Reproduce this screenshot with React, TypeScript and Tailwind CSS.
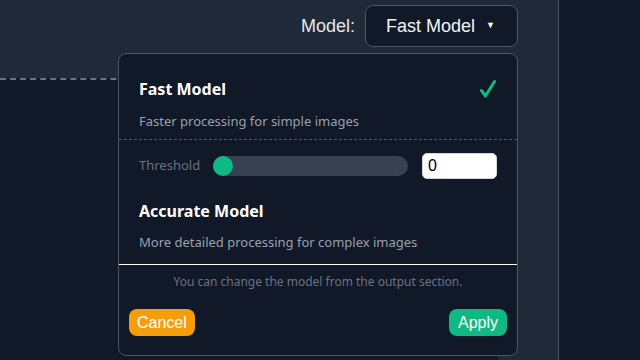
import { useState } from "react";

const options = [
  { id: "fast", name: "Fast Model", desc: "Faster processing for simple images" },
  { id: "accurate", name: "Accurate Model", desc: "More detailed processing for complex images" },
];

const App = () => {
  const [selected, setSelected] = useState("fast");
  const [threshold, setThreshold] = useState("0");

  return (
    <div className="flex w-[640px] h-[360px] overflow-hidden bg-[#111827] font-['Liberation_Sans',Arial,sans-serif]">
      <main className="relative w-[559px] h-full bg-[#1f2937] border-r border-[#4b5563] flex flex-col">
        <header className="flex justify-end items-start pt-[5px] pr-[40px] h-[78px]">
          <div className="flex items-center gap-[10px] h-[42px]">
            <span className="text-[18px] text-gray-200">Model:</span>
            <button className="flex items-center justify-between w-[153px] h-[42px] pl-[20px] pr-[22px] rounded-lg border border-[#4b5563] bg-[#111827] text-[18px] text-gray-100">
              <span>Fast Model</span>
              <span className="text-[9px] text-white">▼</span>
            </button>
          </div>
        </header>
        <div className="flex-1 mr-[60px] bg-[#111827] border-t-2 border-dashed border-[#6b7280]" />

        <div className="absolute left-[118px] top-[53px] w-[400px] h-[303px] rounded-lg border border-[#4b5563] bg-[#111827] flex flex-col font-['Noto_Sans',sans-serif]">
          <div
            className="px-5 pt-[23px] pb-[8px] border-b border-dashed border-[#4b5563] cursor-pointer"
            onClick={() => setSelected("fast")}
          >
            <div className="flex items-center justify-between h-[24px]">
              <span className="text-[16px] font-bold text-white">{options[0].name}</span>
              {selected === "fast" && (
                <svg width="16" height="18" viewBox="0 0 16 18" className="mr-[1px]">
                  <path d="M1.5 10.5 L5.5 16 L14.5 1.5" fill="none" stroke="#10b981" strokeWidth="3" strokeLinecap="round" strokeLinejoin="round" />
                </svg>
              )}
            </div>
            <p className="mt-[10px] text-[13px] leading-[20px] text-gray-400">{options[0].desc}</p>
          </div>

          <div className="flex items-center gap-[13px] px-5 pt-[13px]">
            <span className="text-[13px] text-gray-500">Threshold</span>
            <div className="flex-1 h-[20px] rounded-full bg-[#374151] flex items-center">
              <div className="w-[20px] h-[20px] rounded-full bg-[#10b981]" />
            </div>
            <input
              value={threshold}
              onChange={(e) => setThreshold(e.target.value)}
              className="ml-[1px] w-[75px] h-[26px] rounded-[5px] bg-white border border-gray-300 px-[5px] text-[16px] text-black font-['Liberation_Sans',Arial,sans-serif] outline-none"
            />
          </div>

          <div className="px-5 pt-[20px] pb-[12px] border-b border-white cursor-pointer" onClick={() => setSelected("accurate")}>
            <div className="flex items-center h-[24px]">
              <span className="text-[16px] font-bold text-white">{options[1].name}</span>
            </div>
            <p className="mt-[9px] text-[13px] leading-[20px] text-gray-400">{options[1].desc}</p>
          </div>

          <p className="pt-[9px] text-center text-[12px] leading-[16px] text-gray-500">
            You can change the model from the output section.
          </p>

          <div className="flex justify-between px-[10px] mt-[19px] font-['Liberation_Sans',Arial,sans-serif]">
            <button className="h-[27px] px-[8px] rounded-lg bg-[#f59e0b] text-[16px] text-white">Cancel</button>
            <button className="h-[27px] px-[9px] rounded-lg bg-[#10b981] text-[16px] text-white">Apply</button>
          </div>
        </div>
      </main>
      <aside className="flex-1 bg-[#111827]" />
    </div>
  );
};

export default App;
